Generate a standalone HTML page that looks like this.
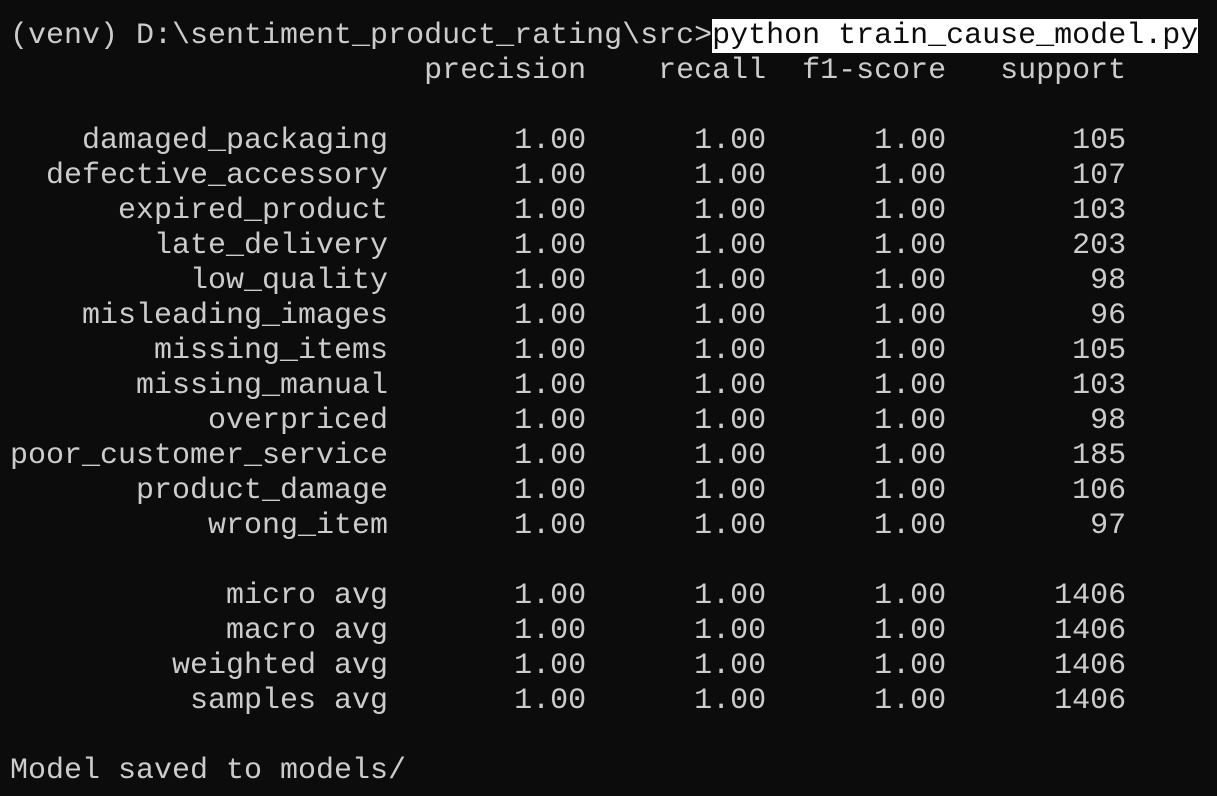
<!DOCTYPE html>
<html><head><meta charset="utf-8"><style>
html,body{margin:0;padding:0;background:#0c0c0c;width:1217px;height:796px;overflow:hidden}
pre{margin:0;padding:19px 0 0 10px;font-family:"Liberation Mono",monospace;font-size:30px;line-height:35px;color:#cccccc;white-space:pre}
.sel{background:#ffffff;color:#0c0c0c}
</style></head><body><pre>(venv) D:\sentiment_product_rating\src&gt;<span class="sel">python train_cause_model.py</span>
                       precision    recall  f1-score   support

    damaged_packaging       1.00      1.00      1.00       105
  defective_accessory       1.00      1.00      1.00       107
      expired_product       1.00      1.00      1.00       103
        late_delivery       1.00      1.00      1.00       203
          low_quality       1.00      1.00      1.00        98
    misleading_images       1.00      1.00      1.00        96
        missing_items       1.00      1.00      1.00       105
       missing_manual       1.00      1.00      1.00       103
           overpriced       1.00      1.00      1.00        98
poor_customer_service       1.00      1.00      1.00       185
       product_damage       1.00      1.00      1.00       106
           wrong_item       1.00      1.00      1.00        97

            micro avg       1.00      1.00      1.00      1406
            macro avg       1.00      1.00      1.00      1406
         weighted avg       1.00      1.00      1.00      1406
          samples avg       1.00      1.00      1.00      1406

Model saved to models/
</pre></body></html>
